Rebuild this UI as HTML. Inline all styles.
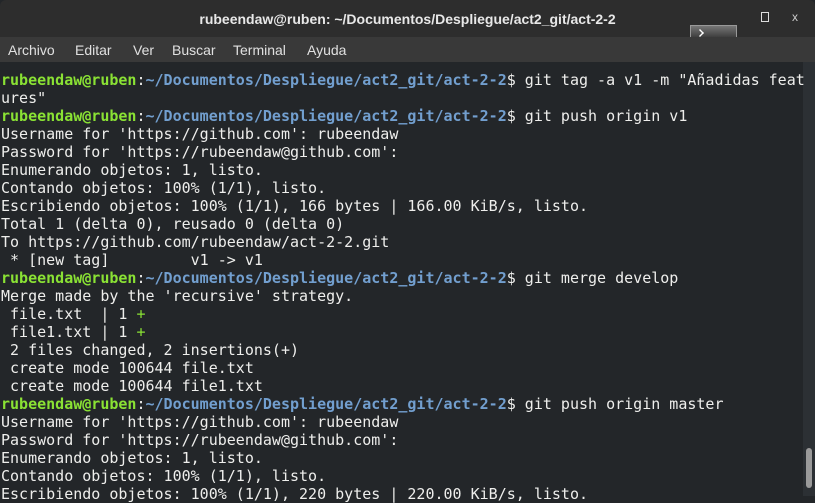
<!DOCTYPE html>
<html><head><meta charset="utf-8"><style>
*{margin:0;padding:0}
body{width:815px;height:496px;overflow:hidden;background:#232629;position:relative;font-family:"Liberation Sans",sans-serif}
#title{position:absolute;left:0;top:0;width:815px;height:37px;background:#2d2d2d;border-radius:6px 6px 0 0;color:#e8e8e8;font-weight:bold;font-size:14px;text-align:center;line-height:38px}
#title span{position:absolute;left:0;width:815px;text-align:center}
#icon{position:absolute;left:690px;top:25px;width:45px;height:12px;background:linear-gradient(#777,#3a3a3a);border:1px solid #999;border-bottom:none;overflow:hidden}
#icon b{position:absolute;left:5px;top:3px;width:6px;height:6px;border-right:2px solid #fff;border-bottom:2px solid #fff;transform:rotate(-45deg) scale(.7)}
#max{position:absolute;left:761px;top:12px;width:6px;height:8px;border:1px solid #ddd}
#close{position:absolute;left:792px;top:7px;color:#ccc;font-size:12px;font-weight:normal;line-height:20px}
#menu{position:absolute;left:0;top:37px;width:815px;height:25px;background:#393939;color:#e0e0e0;font-size:14px;line-height:26px}
#menu span{position:absolute}
#term{position:absolute;left:1px;top:71px;font-family:"DejaVu Sans Mono",monospace;font-size:15px;line-height:18px;color:#eeeeec;white-space:pre}
.g{color:#8ae234;font-weight:bold}.b{color:#729fcf;font-weight:bold}.p{color:#8ae234}
#sb{position:absolute;left:803px;top:62px;width:12px;height:434px;background:#2c3034}
#th{position:absolute;left:806px;top:448px;width:6px;height:40px;background:#9a9a9a;border-radius:3px}
</style></head><body>
<div id="title"><span>rubeendaw@ruben: ~/Documentos/Despliegue/act2_git/act-2-2</span><div id="icon"><b></b></div><div id="max"></div><div id="close">x</div></div>
<div id="menu"><span style="left:8px">Archivo</span><span style="left:75px">Editar</span><span style="left:133px">Ver</span><span style="left:172px">Buscar</span><span style="left:233px">Terminal</span><span style="left:307px">Ayuda</span></div>
<div id="sb"></div><div id="th"></div>
<div id="term"><span class="g">rubeendaw@ruben</span>:<span class="b">~/Documentos/Despliegue/act2_git/act-2-2</span>$ git tag -a v1 -m "Añadidas feat
ures"
<span class="g">rubeendaw@ruben</span>:<span class="b">~/Documentos/Despliegue/act2_git/act-2-2</span>$ git push origin v1
Username for 'https://github.com': rubeendaw
Password for 'https://rubeendaw@github.com': 
Enumerando objetos: 1, listo.
Contando objetos: 100% (1/1), listo.
Escribiendo objetos: 100% (1/1), 166 bytes | 166.00 KiB/s, listo.
Total 1 (delta 0), reusado 0 (delta 0)
To https://github.com/rubeendaw/act-2-2.git
 * [new tag]         v1 -> v1
<span class="g">rubeendaw@ruben</span>:<span class="b">~/Documentos/Despliegue/act2_git/act-2-2</span>$ git merge develop
Merge made by the 'recursive' strategy.
 file.txt  | 1 <span class="p">+</span>
 file1.txt | 1 <span class="p">+</span>
 2 files changed, 2 insertions(+)
 create mode 100644 file.txt
 create mode 100644 file1.txt
<span class="g">rubeendaw@ruben</span>:<span class="b">~/Documentos/Despliegue/act2_git/act-2-2</span>$ git push origin master
Username for 'https://github.com': rubeendaw
Password for 'https://rubeendaw@github.com': 
Enumerando objetos: 1, listo.
Contando objetos: 100% (1/1), listo.
Escribiendo objetos: 100% (1/1), 220 bytes | 220.00 KiB/s, listo.</div>
</body></html>
